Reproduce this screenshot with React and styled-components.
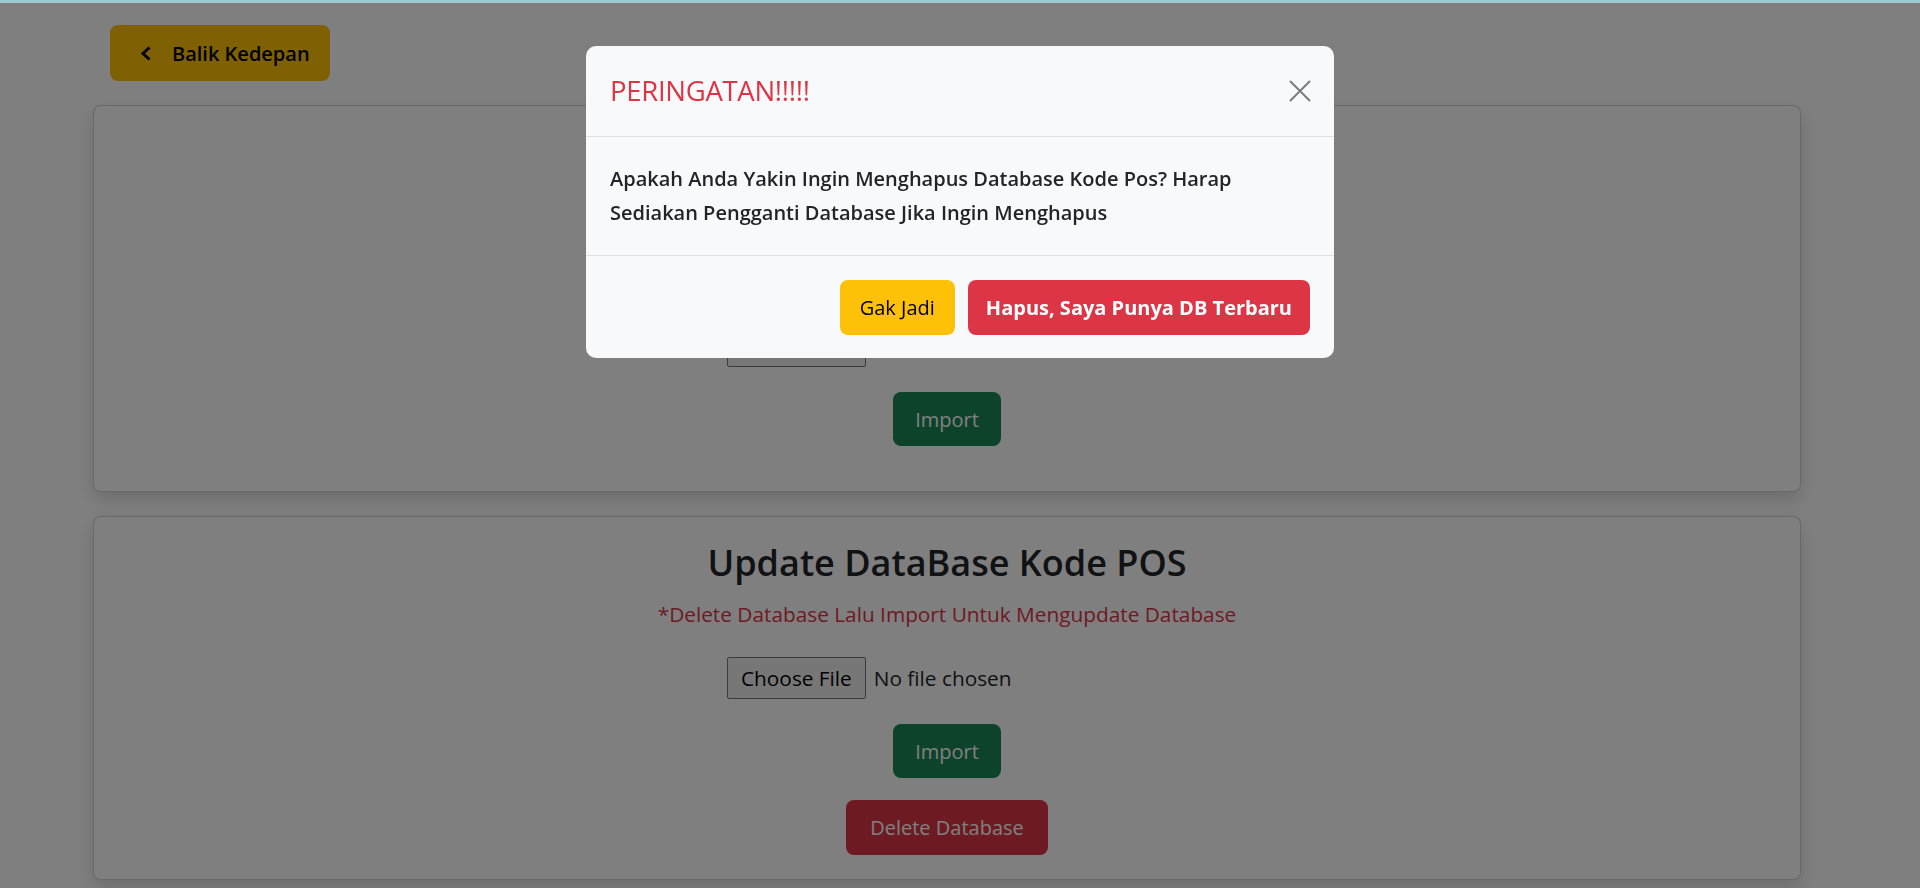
import React from 'react';
import styled, { createGlobalStyle } from 'styled-components';

const GlobalStyle = createGlobalStyle`
  body {
    margin: 0;
    background: #fff;
    font-family: "Open Sans", "Noto Sans", sans-serif;
    color: #212529;
  }
`;

const TopLine = styled.div`
  position: fixed;
  top: 0;
  left: 0;
  right: 0;
  height: 3px;
  background: #9ccbcf;
  z-index: 30;
`;

const Page = styled.div`
  padding: 25px 119px 8px 93px;
`;

const BackButton = styled.button`
  display: inline-flex;
  align-items: center;
  gap: 20px;
  height: 56px;
  margin-left: 17px;
  padding: 0 20px 0 30px;
  border: 0;
  border-radius: 8px;
  background: #ffc107;
  color: #000;
  font-family: inherit;
  font-size: 20px;
  font-weight: 600;
`;

// top padding of the first card is where its (covered) heading sits
const Card = styled.div`
  margin-top: 24px;
  padding: ${(p) => p.$padTop || 25}px 24px ${(p) => p.$padBottom || 24}px;
  border: 1px solid rgba(0, 0, 0, 0.175);
  border-radius: 8px;
  background: #fff;
  box-shadow: 0 8px 18px rgba(0, 0, 0, 0.15);
  display: flex;
  flex-direction: column;
  align-items: center;
`;

const Title = styled.h3`
  margin: 0;
  font-size: 36px;
  line-height: 42px;
  font-weight: 600;
  color: #212529;
`;

const Note = styled.p`
  margin: 15px 0 0;
  font-size: 20.8px;
  line-height: 30px;
  color: #dc3545;
`;

const FileInput = styled.input`
  margin-top: ${(p) => p.$top ?? 28}px;
  width: 440px;
  height: 42px;
  font-family: inherit;
  font-size: 20.8px;
  color: #212529;

  &::file-selector-button {
    height: 42px;
    padding: 0 13px;
    margin-right: 8px;
    font-family: inherit;
    font-size: 20.8px;
    background: #efefef;
    border: 1px solid #767676;
    border-radius: 2px;
  }
`;

const ActionButton = styled.button`
  margin-top: ${(p) => p.$top}px;
  height: ${(p) => p.$h || 54}px;
  padding: 0 ${(p) => p.$px || 22}px;
  border: 0;
  border-radius: 8px;
  background: ${(p) => (p.$variant === 'danger' ? '#dc3545' : '#198754')};
  color: #fff;
  font-family: inherit;
  font-size: 20px;
`;

const Backdrop = styled.div`
  position: fixed;
  inset: 0;
  background: rgba(0, 0, 0, 0.5);
  z-index: 10;
`;

const Dialog = styled.div`
  position: fixed;
  top: 46px;
  left: 50%;
  transform: translateX(-50%);
  width: 748px;
  background: #f8f9fa;
  border-radius: 10px;
  z-index: 20;
  overflow: hidden;
`;

const DialogHeader = styled.div`
  display: flex;
  align-items: center;
  justify-content: space-between;
  padding: 24px 23px 24px 24px;
  border-bottom: 1px solid #dee2e6;
`;

const DialogTitle = styled.h5`
  margin: 0;
  font-size: 27.5px;
  line-height: 42px;
  font-weight: 400;
  color: #dc3545;
  letter-spacing: -0.3px;
`;

const CloseButton = styled.button`
  display: flex;
  padding: 0;
  border: 0;
  background: none;
  opacity: 0.5;
`;

const DialogBody = styled.div`
  padding: 25px 24px;
  font-size: 20px;
  line-height: 34px;
  font-weight: 600;
  color: #212529;
`;

const DialogFooter = styled.div`
  display: flex;
  justify-content: flex-end;
  gap: 13px;
  padding: 24px 24px 23px;
  border-top: 1px solid #dee2e6;
`;

const FooterButton = styled.button`
  height: 55px;
  padding: 0 ${(p) => (p.$variant === 'danger' ? 18 : 20)}px;
  border: 0;
  border-radius: 8px;
  font-family: inherit;
  font-size: 20px;
  font-weight: ${(p) => (p.$variant === 'danger' ? 700 : 400)};
  background: ${(p) => (p.$variant === 'danger' ? '#dc3545' : '#ffc107')};
  color: ${(p) => (p.$variant === 'danger' ? '#fff' : '#000')};
`;

const Chevron = () => (
  <svg width="12" height="15" viewBox="0 0 12 15">
    <path d="M9.5 1.5 L3 7.5 L9.5 13.5" fill="none" stroke="#000" strokeWidth="3" />
  </svg>
);

const CloseIcon = () => (
  <svg width="22" height="22" viewBox="0 0 22 22">
    <path d="M1 1 L21 21 M21 1 L1 21" stroke="#000" strokeWidth="2" />
  </svg>
);

export default function App() {
  return (
    <>
      <GlobalStyle />
      <TopLine />
      <Page>
        <BackButton>
          <Chevron />
          Balik Kedepan
        </BackButton>

        <Card $padTop={219} $padBottom={45}>
          <FileInput type="file" $top={0} />
          <ActionButton $top={25}>Import</ActionButton>
        </Card>

        <Card>
          <Title>Update DataBase Kode POS</Title>
          <Note>*Delete Database Lalu Import Untuk Mengupdate Database</Note>
          <FileInput type="file" />
          <ActionButton $top={25}>Import</ActionButton>
          <ActionButton $top={22} $h={55} $variant="danger" $px={24}>
            Delete Database
          </ActionButton>
        </Card>
      </Page>

      <Backdrop />
      <Dialog>
        <DialogHeader>
          <DialogTitle>PERINGATAN!!!!!</DialogTitle>
          <CloseButton>
            <CloseIcon />
          </CloseButton>
        </DialogHeader>
        <DialogBody>
          Apakah Anda Yakin Ingin Menghapus Database Kode Pos? Harap
          <br />
          Sediakan Pengganti Database Jika Ingin Menghapus
        </DialogBody>
        <DialogFooter>
          <FooterButton>Gak Jadi</FooterButton>
          <FooterButton $variant="danger">Hapus, Saya Punya DB Terbaru</FooterButton>
        </DialogFooter>
      </Dialog>
    </>
  );
}
